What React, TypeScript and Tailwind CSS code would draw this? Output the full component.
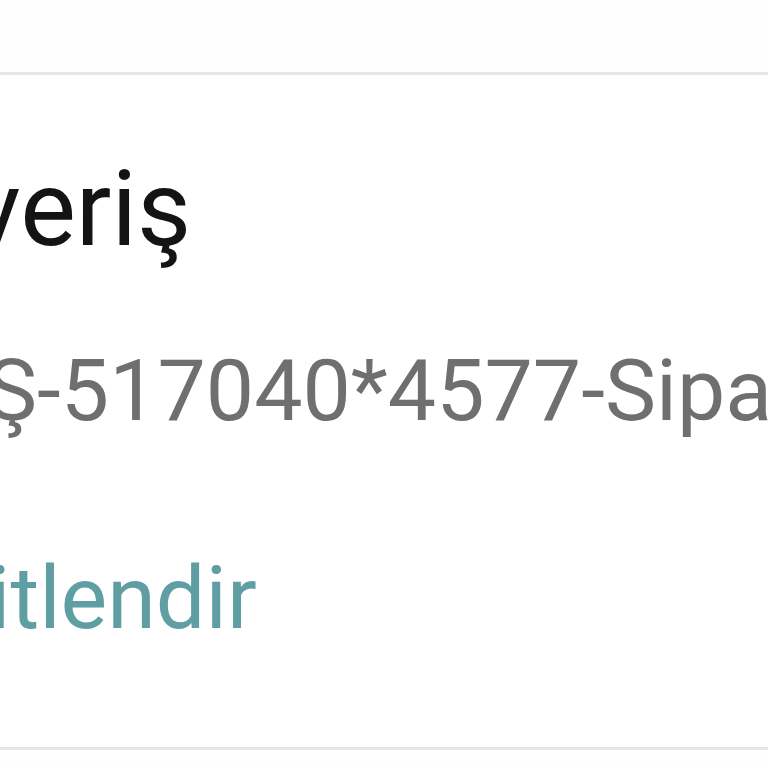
import React from "react";

export default function App() {
  return (
    <div className="w-[768px] h-[768px] overflow-hidden bg-[#fefefe] font-['Roboto',sans-serif]">
      <div className="h-[72px]" />
      <div className="border-y-[3px] border-[#e6e6e6] bg-white pt-[82px] pb-[105px] overflow-hidden">
        <div className="-ml-[30px] whitespace-nowrap text-[105px] leading-none text-[#141414]">veriş</div>
        <div className="mt-[86px] -ml-[14px] whitespace-nowrap text-[86px] leading-none text-[#6f6f6f]">
          Ş-517040*4577-Sipariş
        </div>
        <div className="mt-[120px] -ml-[11px] whitespace-nowrap text-[88px] leading-none text-[#5f9ea3]">itlendir</div>
      </div>
    </div>
  );
}
